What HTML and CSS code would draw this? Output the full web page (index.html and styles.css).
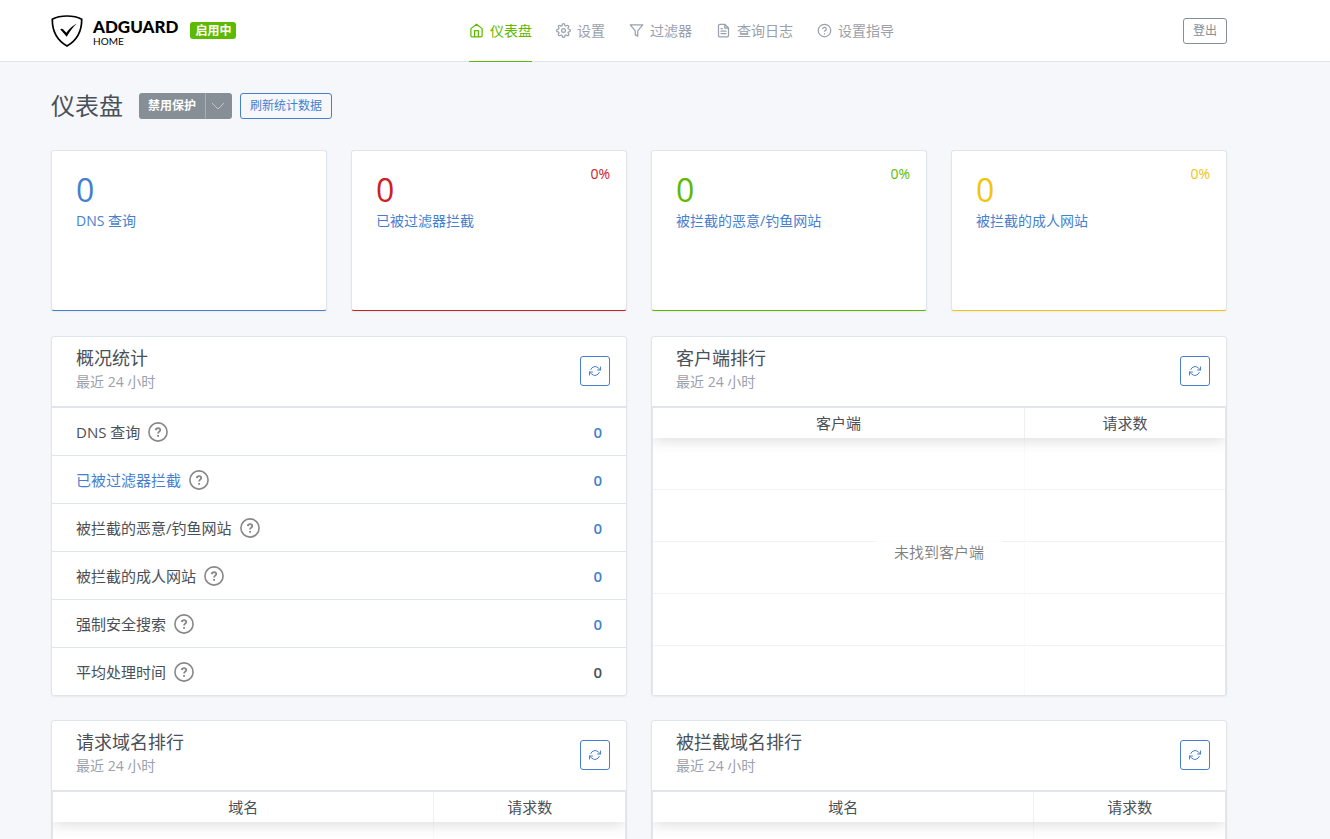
FILE: index.html
```html
<!DOCTYPE html>
<html lang="zh-CN">
<head>
  <meta charset="UTF-8">
  <meta name="viewport" content="width=device-width, initial-scale=1.0">
  <title>AdGuard Home</title>
  <link rel="stylesheet" href="styles.css">
</head>
<body>

  <!-- Shared icons -->
  <svg class="sprite" aria-hidden="true">
    <symbol id="refresh" viewBox="0 0 24 24">
      <path d="M23 4v6h-6M1 20v-6h6M3.51 9a9 9 0 0 1 14.85-3.36L23 10M1 14l4.64 4.36A9 9 0 0 0 20.49 15"/>
    </symbol>
    <symbol id="question" viewBox="0 0 20 20">
      <circle cx="10" cy="10" r="9.1" stroke-width="1.6"/>
      <path d="M7.8 8.1c.1-1.3 1-2 2.2-2s2.2.7 2.2 1.9c0 1.6-2.1 1.7-2.1 3.4M10.1 13v1.7" stroke-width="1.9" stroke-linecap="butt"/>
    </symbol>
  </svg>

  <header class="header">
    <div class="container header-row">
      <div class="brand">
        <a href="#" class="logo">
          <svg class="logo-shield" viewBox="0 0 32 32" aria-hidden="true">
            <path d="M16 1C11 1 5.500 2 1.300 4.200C1.300 9 .8 22 16 31C31.200 22 30.700 9 30.700 4.200C26.500 2 21 1 16 1Z" fill="none" stroke="#000" stroke-width="1.700"/>
            <path d="M9.200 14.200C10.600 13.200 11.700 13.700 12.500 14.700L15.300 17.700C18.500 13.500 21.800 10.500 26 8.400C22 12 18.700 16.500 15.700 21.700Z" fill="#000"/>
          </svg>
          <span class="logo-text">
            <span class="logo-name">ADGUARD</span>
            <span class="logo-sub">HOME</span>
          </span>
        </a>
        <span class="badge">启用中</span>
      </div>

      <nav class="nav">
        <a href="#" class="nav-link active">
          <svg class="icon" viewBox="0 0 24 24"><path d="M3 9l9-7 9 7v11a2 2 0 0 1-2 2H5a2 2 0 0 1-2-2zM9 22V12h6v10"/></svg>
          仪表盘
        </a>
        <a href="#settings" class="nav-link">
          <svg class="icon" viewBox="0 0 24 24"><circle cx="12" cy="12" r="3"/><path d="M19.400 15a1.650 1.650 0 0 0 .33 1.820l.06.06a2 2 0 0 1 0 2.830 2 2 0 0 1-2.830 0l-.06-.06a1.650 1.650 0 0 0-1.820-.33 1.650 1.650 0 0 0-1 1.510V21a2 2 0 0 1-2 2 2 2 0 0 1-2-2v-.09A1.650 1.650 0 0 0 9 19.400a1.650 1.650 0 0 0-1.820.33l-.06.06a2 2 0 0 1-2.830 0 2 2 0 0 1 0-2.830l.06-.06a1.650 1.650 0 0 0 .33-1.820 1.650 1.650 0 0 0-1.510-1H3a2 2 0 0 1-2-2 2 2 0 0 1 2-2h.09A1.650 1.650 0 0 0 4.600 9a1.650 1.650 0 0 0-.33-1.820l-.06-.06a2 2 0 0 1 0-2.830 2 2 0 0 1 2.830 0l.06.06a1.650 1.650 0 0 0 1.820.33H9a1.650 1.650 0 0 0 1-1.510V3a2 2 0 0 1 2-2 2 2 0 0 1 2 2v.09a1.650 1.650 0 0 0 1 1.510 1.650 1.650 0 0 0 1.820-.33l.06-.06a2 2 0 0 1 2.830 0 2 2 0 0 1 0 2.830l-.06.06a1.650 1.650 0 0 0-.33 1.820V9a1.650 1.650 0 0 0 1.510 1H21a2 2 0 0 1 2 2 2 2 0 0 1-2 2h-.09a1.650 1.650 0 0 0-1.510 1z"/></svg>
          设置
        </a>
        <a href="#filters" class="nav-link">
          <svg class="icon" viewBox="0 0 24 24"><path d="M22 3H2l8 9.460V19l4 2v-8.540z"/></svg>
          过滤器
        </a>
        <a href="#logs" class="nav-link">
          <svg class="icon" viewBox="0 0 24 24"><path d="M14 2H6a2 2 0 0 0-2 2v16a2 2 0 0 0 2 2h12a2 2 0 0 0 2-2V8zM14 2v6h6M16 13H8M16 17H8M10 9H8"/></svg>
          查询日志
        </a>
        <a href="#guide" class="nav-link">
          <svg class="icon" viewBox="0 0 24 24"><circle cx="12" cy="12" r="10"/><path d="M9.090 9a3 3 0 0 1 5.830 1c0 2-3 3-3 3M12 17v.5"/></svg>
          设置指导
        </a>
      </nav>

      <a href="#logout" class="btn btn-outline-secondary">登出</a>
    </div>
  </header>

  <main class="container">
    <div class="page-header">
      <h1 class="page-title">仪表盘</h1>
      <div class="btn-group">
        <button type="button" class="btn btn-gray">禁用保护</button>
        <button type="button" class="btn btn-gray btn-caret" aria-label="更多">
          <svg class="caret" viewBox="0 0 14 8"><path d="M1 1l6 6 6-6"/></svg>
        </button>
      </div>
      <button type="button" class="btn btn-outline-primary">刷新统计数据</button>
    </div>

    <div class="counters">
      <div class="card counter blue">
        <div class="counter-value">0</div>
        <a href="#logs" class="counter-label">DNS 查询</a>
      </div>
      <div class="card counter red">
        <div class="counter-value">0</div>
        <a href="#logs" class="counter-label">已被过滤器拦截</a>
        <div class="counter-percent">0%</div>
      </div>
      <div class="card counter green">
        <div class="counter-value">0</div>
        <a href="#logs" class="counter-label">被拦截的恶意/钓鱼网站</a>
        <div class="counter-percent">0%</div>
      </div>
      <div class="card counter yellow">
        <div class="counter-value">0</div>
        <a href="#logs" class="counter-label">被拦截的成人网站</a>
        <div class="counter-percent">0%</div>
      </div>
    </div>

    <div class="panels">
      <!-- General statistics -->
      <section class="card">
        <div class="card-header">
          <div class="card-heading">
            <h2 class="card-title">概况统计</h2>
            <div class="card-subtitle">最近 24 小时</div>
          </div>
          <button type="button" class="btn-refresh" aria-label="刷新"><svg class="icon"><use href="#refresh"/></svg></button>
        </div>
        <table class="stats">
          <tr>
            <td><div class="stat-name">DNS 查询 <svg class="help"><use href="#question"/></svg></div></td>
            <td class="stat-value"><a href="#logs">0</a></td>
          </tr>
          <tr>
            <td><div class="stat-name"><a href="#logs">已被过滤器拦截</a> <svg class="help"><use href="#question"/></svg></div></td>
            <td class="stat-value"><a href="#logs">0</a></td>
          </tr>
          <tr>
            <td><div class="stat-name">被拦截的恶意/钓鱼网站 <svg class="help"><use href="#question"/></svg></div></td>
            <td class="stat-value"><a href="#logs">0</a></td>
          </tr>
          <tr>
            <td><div class="stat-name">被拦截的成人网站 <svg class="help"><use href="#question"/></svg></div></td>
            <td class="stat-value"><a href="#logs">0</a></td>
          </tr>
          <tr>
            <td><div class="stat-name">强制安全搜索 <svg class="help"><use href="#question"/></svg></div></td>
            <td class="stat-value"><a href="#logs">0</a></td>
          </tr>
          <tr>
            <td><div class="stat-name">平均处理时间 <svg class="help"><use href="#question"/></svg></div></td>
            <td class="stat-value">0</td>
          </tr>
        </table>
      </section>

      <!-- Top clients -->
      <section class="card">
        <div class="card-header">
          <div class="card-heading">
            <h2 class="card-title">客户端排行</h2>
            <div class="card-subtitle">最近 24 小时</div>
          </div>
          <button type="button" class="btn-refresh" aria-label="刷新"><svg class="icon"><use href="#refresh"/></svg></button>
        </div>
        <div class="table-wrap">
          <table class="top-table clients">
            <thead>
              <tr><th>客户端</th><th>请求数</th></tr>
            </thead>
            <tbody>
              <tr><td></td><td></td></tr>
              <tr><td></td><td></td></tr>
              <tr><td></td><td></td></tr>
              <tr><td></td><td></td></tr>
              <tr><td></td><td></td></tr>
            </tbody>
          </table>
          <div class="no-data">未找到客户端</div>
        </div>
      </section>

      <!-- Top queried domains -->
      <section class="card">
        <div class="card-header">
          <div class="card-heading">
            <h2 class="card-title">请求域名排行</h2>
            <div class="card-subtitle">最近 24 小时</div>
          </div>
          <button type="button" class="btn-refresh" aria-label="刷新"><svg class="icon"><use href="#refresh"/></svg></button>
        </div>
        <div class="table-wrap">
          <table class="top-table">
            <thead>
              <tr><th>域名</th><th>请求数</th></tr>
            </thead>
            <tbody>
              <tr><td></td><td></td></tr>
            </tbody>
          </table>
        </div>
      </section>

      <!-- Top blocked domains -->
      <section class="card">
        <div class="card-header">
          <div class="card-heading">
            <h2 class="card-title">被拦截域名排行</h2>
            <div class="card-subtitle">最近 24 小时</div>
          </div>
          <button type="button" class="btn-refresh" aria-label="刷新"><svg class="icon"><use href="#refresh"/></svg></button>
        </div>
        <div class="table-wrap">
          <table class="top-table">
            <thead>
              <tr><th>域名</th><th>请求数</th></tr>
            </thead>
            <tbody>
              <tr><td></td><td></td></tr>
            </tbody>
          </table>
        </div>
      </section>
    </div>
  </main>

</body>
</html>
```
FILE: styles.css
```css
* {
  box-sizing: border-box;
}

body {
  margin: 0;
  background-color: #f5f7fb;
  color: #495057;
  font-family: "Open Sans", "Noto Sans CJK SC", sans-serif;
  font-size: 15px;
  line-height: 24px;
}

a {
  color: #467fcf;
  text-decoration: none;
}

h1, h2 {
  margin: 0;
  font-weight: 400;
}

.sprite {
  display: none;
}

.icon {
  flex: none;
  width: 15px;
  height: 15px;
  fill: none;
  stroke: currentColor;
  stroke-width: 2;
  stroke-linecap: round;
  stroke-linejoin: round;
}

.container {
  margin: 0 103px 0 51px;
}

/* Header */
.header {
  background-color: #fff;
  border-bottom: 1px solid #e0e5ec;
}

.header-row {
  display: grid;
  grid-template-columns: 418px 1fr auto;
  align-items: center;
  height: 61px;
}

.brand,
.logo {
  display: flex;
  align-items: center;
}

.brand {
  gap: 12px;
}

.logo {
  gap: 10px;
  color: #000;
}

.logo-shield {
  width: 32px;
  height: 32px;
}

.logo-text {
  display: flex;
  flex-direction: column;
  padding-top: 2px;
  font-family: Lato, sans-serif;
}

.logo-name {
  font-size: 17px;
  font-weight: 900;
  line-height: 18px;
}

.logo-sub {
  font-size: 10px;
  line-height: 10px;
}

.badge {
  padding: 0 5px;
  border-radius: 3px;
  background-color: #5eba00;
  color: #fff;
  font-size: 12px;
  font-weight: 600;
  line-height: 17px;
}

.nav {
  display: flex;
  align-self: stretch;
  gap: 24px;
  margin-bottom: -1px;
}

.nav-link {
  display: flex;
  align-items: center;
  gap: 6px;
  border-bottom: 1px solid transparent;
  color: #9aa0ac;
  font-size: 14px;
}

.nav-link.active {
  border-color: #5eba00;
  color: #5eba00;
}

/* Buttons */
.btn {
  height: 26px;
  padding: 0 9px;
  border: 1px solid transparent;
  border-radius: 3px;
  font-family: inherit;
  font-size: 12px;
  line-height: 24px;
  cursor: pointer;
}

.btn-outline-secondary {
  border-color: #868e96;
  color: #868e96;
}

.btn-outline-primary {
  border-color: #467fcf;
  background-color: transparent;
  color: #467fcf;
}

.btn-gray {
  padding: 0 8px;
  background-color: #868e96;
  color: #fff;
  font-weight: 600;
}

.btn-group {
  display: flex;
}

.btn-group .btn:first-child {
  border-radius: 3px 0 0 3px;
}

.btn-group .btn-caret {
  display: flex;
  align-items: center;
  padding: 0 6px 0 5px;
  border-left-color: #a9afb5;
  border-radius: 0 3px 3px 0;
}

.caret {
  width: 14px;
  height: 8px;
  fill: none;
  stroke: #c3c7cb;
}

.btn-refresh {
  display: flex;
  align-items: center;
  justify-content: center;
  width: 30px;
  height: 30px;
  padding: 0;
  border: 1px solid #467fcf;
  border-radius: 3px;
  background-color: transparent;
  color: #467fcf;
  cursor: pointer;
}

.btn-refresh .icon {
  width: 12px;
  height: 12px;
}

/* Page heading */
.page-header {
  display: flex;
  align-items: center;
  gap: 8px;
  padding: 31px 0;
}

.page-title {
  margin-right: 8px;
  font-size: 24px;
  line-height: 26px;
}

/* Cards */
.card {
  overflow: hidden;
  border: 1px solid #e0e5ec;
  border-radius: 3px;
  background-color: #fff;
  box-shadow: 0 1px 2px 0 rgba(0, 0, 0, 0.05);
}

.counters,
.panels {
  display: grid;
  gap: 24px;
  margin-bottom: 25px;
}

.counters {
  grid-template-columns: repeat(4, 1fr);
}

.panels {
  grid-template-columns: repeat(2, 1fr);
}

.counter {
  position: relative;
  height: 161px;
  padding: 23px 24px;
}

.counter-value {
  font-size: 32px;
  line-height: 32px;
}

.counter-label {
  font-size: 14px;
  line-height: 30px;
}

.counter-percent {
  position: absolute;
  top: 11px;
  right: 16px;
  font-size: 14px;
}

.blue {
  border-bottom-color: #467fcf;
  color: #467fcf;
}

.red {
  border-bottom-color: #cd201f;
  color: #cd201f;
}

.green {
  border-bottom-color: #5eba00;
  color: #5eba00;
}

.yellow {
  border-bottom-color: #f1c40f;
  color: #f1c40f;
}

.card-header {
  display: flex;
  align-items: center;
  justify-content: space-between;
  height: 70px;
  padding: 0 16px 2px 24px;
  border-bottom: 1px solid #e0e5ec;
}

.card-heading {
  padding-bottom: 2px;
}

.card-title {
  font-size: 18px;
  line-height: 24px;
}

.card-subtitle {
  color: #9aa0ac;
  font-size: 14px;
}

/* General statistics */
.stats {
  width: 100%;
  border-spacing: 0;
}

.stats td {
  height: 48px;
  padding: 0 24px;
  border-top: 1px solid #e0e5ec;
}

.stat-name {
  display: flex;
  align-items: center;
  gap: 8px;
}

.stats .stat-value {
  font-weight: 600;
  text-align: right;
}

.help {
  width: 20px;
  height: 20px;
  fill: none;
  stroke: #888;
}

/* Top lists */
.table-wrap {
  position: relative;
  overflow: hidden;
  border: 1px solid #e3e5e8;
  border-bottom: none;
}

.top-table {
  width: 100%;
  table-layout: fixed;
  border-spacing: 0;
}

.top-table thead {
  position: relative;
  box-shadow: 0 2px 15px 0 rgba(0, 0, 0, 0.15);
}

.top-table th {
  height: 30px;
  padding: 0;
  font-weight: 400;
}

.top-table th:first-child {
  width: calc(200% / 3);
  border-right: 1px solid #f0f0f0;
}

.top-table.clients th:first-child {
  width: 65%;
}

.top-table td {
  height: 52px;
  padding: 0;
  border-bottom: 1px solid #f2f2f2;
}

.top-table td:first-child {
  border-right: 1px solid #fafafa;
}

.top-table tr:last-child td {
  height: 49px;
  border-bottom: none;
}

.no-data {
  position: absolute;
  top: 50%;
  left: 50%;
  padding: 18px;
  background-color: rgba(255, 255, 255, 0.8);
  color: rgba(0, 0, 0, 0.5);
  transform: translate(-50%, -50%);
}
```
